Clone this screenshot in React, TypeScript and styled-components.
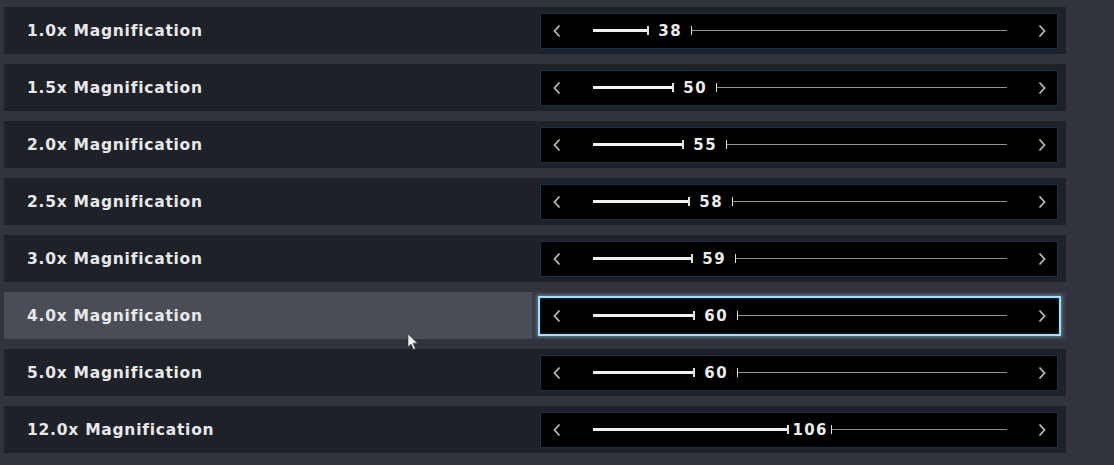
import React from "react";
import styled, { createGlobalStyle, css } from "styled-components";

const Global = createGlobalStyle`
  html, body { margin: 0; padding: 0; background: #31333d; }
  body { width: 1114px; height: 465px; overflow: hidden; font-family: "DejaVu Sans", "Liberation Sans", sans-serif; }
`;

const Page = styled.div`
  position: relative;
  width: 1114px;
  height: 465px;
  background: #31333d;
  padding: 7px 0 0 4px;
  box-sizing: border-box;
`;

const List = styled.div`
  width: 1062px;
  display: flex;
  flex-direction: column;
  gap: 10px;
`;

const Row = styled.div<{ $focused?: boolean }>`
  height: 47px;
  display: flex;
  align-items: center;
  background: ${(p) => (p.$focused ? "#4a4d56" : "#1e2128")};
  box-sizing: border-box;
`;

const Label = styled.div`
  flex: 1;
  padding-left: 23px;
  padding-top: 2px;
  color: #e8e8ea;
  font-size: 15.5px;
  font-weight: 700;
  letter-spacing: 0.75px;
  line-height: 45px;
`;

const SliderCell = styled.div<{ $focused?: boolean }>`
  height: 47px;
  width: 534px;
  display: flex;
  align-items: center;
  justify-content: flex-end;
  padding-right: 8px;
  box-sizing: border-box;
  background: ${(p) => (p.$focused ? "#393c45" : "transparent")};
`;

const Box = styled.div<{ $focused?: boolean }>`
  width: 518px;
  height: 36px;
  box-sizing: border-box;
  background: #000;
  border: 1px solid #15334a;
  display: flex;
  align-items: center;
  padding: 0 10px 0 11px;
  ${(p) =>
    p.$focused &&
    css`
      width: 523px;
      height: 40px;
      margin-right: -3px;
      border: 2px solid #a6dcf5;
      box-shadow: 0 0 3px 1px rgba(120, 190, 230, 0.55), inset 0 0 2px rgba(120, 190, 230, 0.5);
      padding: 0 12px 0 12px;
    `}
`;

const Chevron = styled.svg`
  width: 10px;
  height: 14px;
  flex: none;
`;

const Track = styled.div`
  flex: 1;
  display: flex;
  align-items: center;
  margin: 0 30px 0 31px;
  height: 12px;
`;

const Fill = styled.div`
  height: 3px;
  background: #f2f2f2;
  flex: none;
`;

const Value = styled.div`
  flex: none;
  width: 45px;
  height: 12px;
  position: relative;
  display: flex;
  align-items: center;
  justify-content: center;
  color: #ececec;
  font-size: 15px;
  font-weight: 700;
  letter-spacing: 1.4px;
  line-height: 12px;
  padding-left: 1.4px;
  box-sizing: border-box;
  &::before, &::after {
    content: "";
    position: absolute;
    top: 1.5px;
    width: 1.5px;
    height: 9px;
    background: #e0e0e0;
  }
  &::before { left: 0; }
  &::after { right: 0; }
`;

const Rest = styled.div`
  flex: 1;
  height: 1.5px;
  background: #909092;
`;

const Cursor = styled.svg`
  position: absolute;
  left: 407px;
  top: 333px;
  width: 12px;
  height: 18px;
`;

const rows = [
  { label: "1.0x Magnification", value: 38 },
  { label: "1.5x Magnification", value: 50 },
  { label: "2.0x Magnification", value: 55 },
  { label: "2.5x Magnification", value: 58 },
  { label: "3.0x Magnification", value: 59 },
  { label: "4.0x Magnification", value: 60, focused: true },
  { label: "5.0x Magnification", value: 60 },
  { label: "12.0x Magnification", value: 106 },
];

const Left = () => (
  <Chevron viewBox="0 0 10 14">
    <path d="M7.5 1.5 L2.5 7 L7.5 12.5" fill="none" stroke="#b8b8bc" strokeWidth="1.8" />
  </Chevron>
);
const Right = () => (
  <Chevron viewBox="0 0 10 14">
    <path d="M2.5 1.5 L7.5 7 L2.5 12.5" fill="none" stroke="#b8b8bc" strokeWidth="1.8" />
  </Chevron>
);

export default function App() {
  return (
    <Page>
      <Global />
      <List>
        {rows.map((r) => (
          <Row key={r.label} $focused={r.focused}>
            <Label>{r.label}</Label>
            <SliderCell $focused={r.focused}>
              <Box $focused={r.focused}>
                <Left />
                <Track>
                  <Fill style={{ width: `${Math.round(2.06 * r.value - 24)}px` }} />
                  <Value>{r.value}</Value>
                  <Rest />
                </Track>
                <Right />
              </Box>
            </SliderCell>
          </Row>
        ))}
      </List>
      <Cursor viewBox="0 0 12 18">
        <path d="M1 1 L1 14 L4 11 L6.5 16.5 L8.5 15.6 L6 10.2 L10.5 10.2 Z" fill="#f4f4f4" stroke="#333" strokeWidth="0.6" />
      </Cursor>
    </Page>
  );
}
